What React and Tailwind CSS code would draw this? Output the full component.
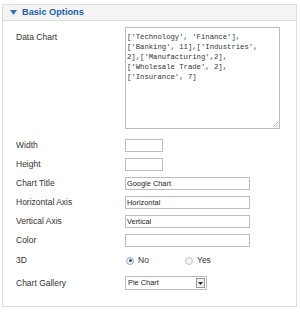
import React from "react";

const Row = ({ label, children, className = "" }) => (
  <div className={`flex items-center h-[13px] ${className}`}>
    <div className="w-[109px] text-[8.5px] text-[#333]">{label}</div>
    {children}
  </div>
);

const TextInput = ({ value = "", w = "w-[125px]" }) => (
  <div
    className={`${w} h-[13px] border border-[#bdbdbd] bg-white text-[7.4px] leading-[11px] pl-[1px] text-[#222]`}
  >
    {value}
  </div>
);

const App = () => {
  const data = [
    "['Technology', 'Finance'],",
    "['Banking', 11],['Industries',",
    "2],['Manufacturing',2],",
    "['Wholesale Trade', 2],",
    "['Insurance', 7]",
  ];

  return (
    <div
      className="w-[300px] h-[312px] bg-white pt-[4px] pl-[2px]"
      style={{ fontFamily: '"Liberation Sans", Arial, sans-serif' }}
    >
      <div className="w-[295px] h-[303px] border border-[#dcdcdc]">
        {/* Header */}
        <div className="flex items-center h-[16px] bg-[#f4f4f4] border-b border-[#dcdcdc] pl-[7px]">
          <svg width="7" height="5" viewBox="0 0 7 5" className="mr-[5px]">
            <polygon points="0,0 7,0 3.5,5" fill="#2a78c2" />
          </svg>
          <span className="text-[9.2px] font-bold text-[#1b5ea8]">Basic Options</span>
        </div>

        <div className="pl-[13px]">
          {/* Data chart */}
          <div className="flex mt-[6px]">
            <div className="w-[109px] text-[8.5px] text-[#333] pt-[4px]">Data Chart</div>
            <div className="relative w-[155px] h-[102px] border border-[#bdbdbd] bg-white pl-[1px] pt-[4px]">
              {data.map((line) => (
                <div
                  key={line}
                  className="text-[7.25px] leading-[10px] text-[#333] whitespace-pre"
                  style={{ fontFamily: '"Liberation Mono", "Courier New", monospace' }}
                >
                  {line}
                </div>
              ))}
              <svg width="6" height="6" viewBox="0 0 6 6" className="absolute right-[1px] bottom-[1px]">
                <line x1="1" y1="6" x2="6" y2="1" stroke="#aaa" strokeWidth="0.8" />
                <line x1="3.5" y1="6" x2="6" y2="3.5" stroke="#aaa" strokeWidth="0.8" />
              </svg>
            </div>
          </div>

          <div className="flex flex-col gap-[6px] mt-[10px]">
            <Row label="Width">
              <TextInput w="w-[38px]" />
            </Row>
            <Row label="Height">
              <TextInput w="w-[38px]" />
            </Row>
            <Row label="Chart Title">
              <TextInput value="Google Chart" />
            </Row>
            <Row label="Horizontal Axis">
              <TextInput value="Horizontal" />
            </Row>
            <Row label="Vertical Axis">
              <TextInput value="Vertical" />
            </Row>
            <Row label="Color">
              <TextInput />
            </Row>
          </div>

          <Row label="3D" className="mt-[7px]">
            <div className="flex items-center w-[60px] pl-[1px]">
              <span className="w-[8px] h-[8px] rounded-full border border-[#9aa7b4] bg-[#eef2f6] flex items-center justify-center mr-[4px]">
                <span className="w-[3px] h-[3px] rounded-full bg-[#2a5a8a]" />
              </span>
              <span className="text-[8.5px] text-[#333]">No</span>
            </div>
            <div className="flex items-center">
              <span className="w-[8px] h-[8px] rounded-full border border-[#c4c4c4] bg-[#f4f4f4] mr-[4px]" />
              <span className="text-[8.5px] text-[#333]">Yes</span>
            </div>
          </Row>

          <Row label="Chart Gallery" className="mt-[9px] !h-[14px]">
            <div className="flex items-center w-[82px] h-[14px] border border-[#bdbdbd] bg-white pl-[2px] pr-[1px]">
              <span className="flex-1 text-[7.4px] text-[#222]">Pie Chart</span>
              <span className="w-[9px] h-[10px] border border-[#999] bg-[#f0f0f0] flex items-center justify-center">
                <svg width="5" height="3" viewBox="0 0 5 3">
                  <polygon points="0,0 5,0 2.5,3" fill="#222" />
                </svg>
              </span>
            </div>
          </Row>
        </div>
      </div>
    </div>
  );
};

export default App;
